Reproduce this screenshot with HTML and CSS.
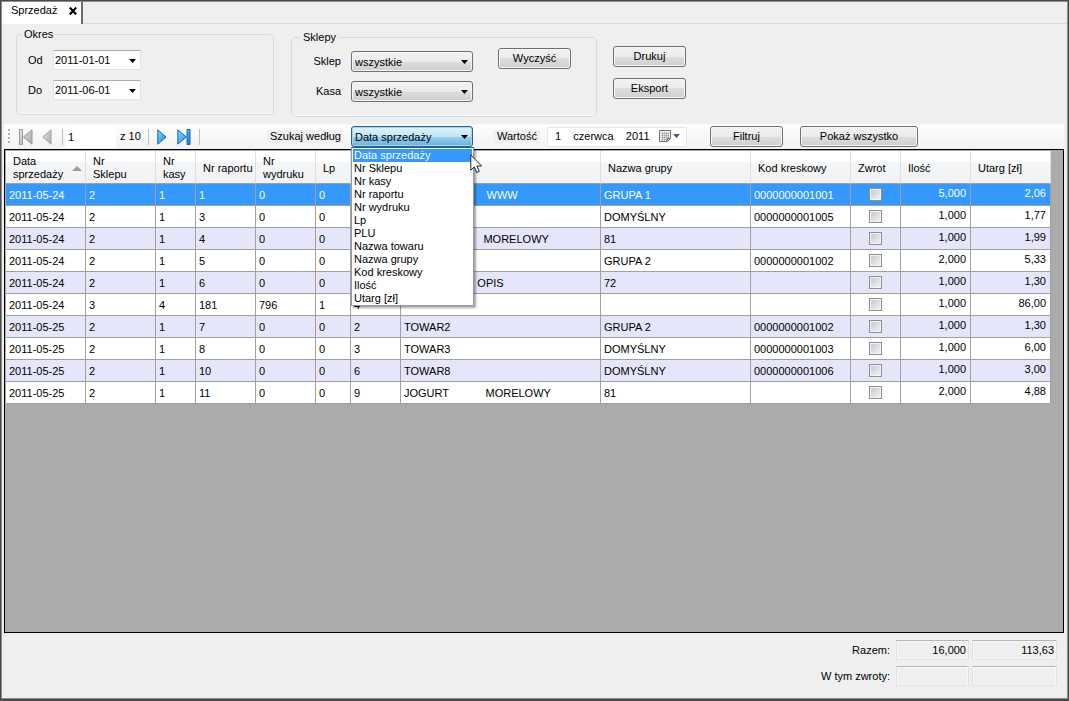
FILE: index.html
```html
<!DOCTYPE html>
<html lang="pl">
<head>
<meta charset="utf-8">
<title>Sprzedaż</title>
<link rel="stylesheet" href="styles.css">
</head>
<body>
<div class="window">
  <header class="tabs">
    <div class="tab">Sprzedaż
      <button class="tab-close" type="button" aria-label="Zamknij"><svg width="8" height="8" viewBox="0 0 8 8"><path d="M.8 .6L7.200 7.400M7.200 .6L.8 7.400" stroke="#000" stroke-width="2.2"/></svg></button>
    </div>
  </header>

  <section class="filters">
    <fieldset class="group period">
      <legend>Okres</legend>
      <div class="period-grid">
        <label for="od">Od</label>
        <div class="pick"><select id="od" class="date-select"><option>2011-01-01</option></select><svg class="arrow" width="7" height="4" viewBox="0 0 7 4"><path d="M0 0H7L3.500 4Z"/></svg></div>
        <label for="do">Do</label>
        <div class="pick"><select id="do" class="date-select"><option>2011-06-01</option></select><svg class="arrow" width="7" height="4" viewBox="0 0 7 4"><path d="M0 0H7L3.500 4Z"/></svg></div>
      </div>
    </fieldset>

    <fieldset class="group shops">
      <legend>Sklepy</legend>
      <div class="shops-body">
        <div class="shops-grid">
          <label for="sklep">Sklep</label>
          <div class="pick"><select id="sklep" class="combo"><option>wszystkie</option></select><svg class="arrow" width="7" height="4" viewBox="0 0 7 4"><path d="M0 0H7L3.500 4Z"/></svg></div>
          <label for="kasa">Kasa</label>
          <div class="pick"><select id="kasa" class="combo"><option>wszystkie</option></select><svg class="arrow" width="7" height="4" viewBox="0 0 7 4"><path d="M0 0H7L3.500 4Z"/></svg></div>
        </div>
        <button class="btn" type="button">Wyczyść</button>
      </div>
    </fieldset>

    <div class="actions">
      <button class="btn" type="button">Drukuj</button>
      <button class="btn" type="button">Eksport</button>
    </div>
  </section>

  <nav class="toolbar">
    <div class="pager">
      <svg class="grip" width="2" height="15" viewBox="0 0 2 15" fill="#b4b4b4"><path d="M0 0h2v2H0zM0 4h2v2H0zM0 8h2v2H0zM0 12h2v2H0z"/></svg>
      <button class="nav nav-first" type="button" aria-label="Pierwsza"><svg width="14" height="16" viewBox="0 0 14 16"><defs><linearGradient id="gray" x1="0" y1="0" x2="1" y2="1"><stop offset="0" stop-color="#e6e6e6"/><stop offset="1" stop-color="#a8a8a8"/></linearGradient><linearGradient id="blue" x1="0" y1="0" x2="1" y2="1"><stop offset="0" stop-color="#8fdcfc"/><stop offset="1" stop-color="#0a83dc"/></linearGradient></defs><path d="M.5.5h3v15h-3zM13 .8v14.400L4.500 8z" fill="url(#gray)" stroke="#999"/></svg></button>
      <button class="nav nav-prev" type="button" aria-label="Poprzednia"><svg width="10" height="16" viewBox="0 0 10 16"><path d="M9 .8v14.400L.8 8z" fill="url(#gray)" stroke="#a0a0a0"/></svg></button>
      <span class="sep"></span>
      <input class="page-no" type="text" value="1" aria-label="Strona">
      <span class="page-total">z 10</span>
      <span class="sep"></span>
      <button class="nav nav-next" type="button" aria-label="Następna"><svg width="10" height="16" viewBox="0 0 10 16"><path d="M.8.8v14.400L9 8z" fill="url(#blue)" stroke="#0b66b8"/></svg></button>
      <button class="nav nav-last" type="button" aria-label="Ostatnia"><svg width="14" height="16" viewBox="0 0 14 16"><path d="M.8.8v14.400L9.300 8zM10 .5h3v15h-3z" fill="url(#blue)" stroke="#0b66b8"/></svg></button>
      <span class="sep"></span>
    </div>
    <label class="chip search-label" for="pole">Szukaj według</label>
    <div class="pick search">
      <select id="pole" class="combo combo-open"><option>Data sprzedaży</option></select><svg class="arrow" width="7" height="4" viewBox="0 0 7 4"><path d="M0 0H7L3.500 4Z"/></svg>
      <ul class="menu" role="listbox" aria-label="Szukaj według">
        <li class="current" role="option" aria-selected="true">Data sprzedaży</li>
        <li role="option">Nr Sklepu</li>
        <li role="option">Nr kasy</li>
        <li role="option">Nr raportu</li>
        <li role="option">Nr wydruku</li>
        <li role="option">Lp</li>
        <li role="option">PLU</li>
        <li role="option">Nazwa towaru</li>
        <li role="option">Nazwa grupy</li>
        <li role="option">Kod kreskowy</li>
        <li role="option">Ilość</li>
        <li role="option">Utarg [zł]</li>
      </ul>
      <svg class="cursor" width="13" height="20" viewBox="0 0 13 20"><path d="M.8 1v15.200l3.500-3.300 2.400 5.600 2.600-1.100-2.400-5.400h4.700z" fill="#fff" stroke="#223" stroke-width="1"/></svg>
    </div>
    <label class="chip value-label" for="wartosc">Wartość</label>
    <div class="date-value">
      <input id="wartosc" type="text" value="1    czerwca    2011">
      <svg class="calendar" width="21" height="13" viewBox="0 0 21 13"><path d="M.5.5h11v8l-3 3h-8z" fill="#f4f2ee" stroke="#77726c"/><path d="M2 3.500h8M2 5.500h8M2 7.500h8M2 9.500h6M3.500 2v9M5.500 2v9M7.500 2v9M9.500 2v6" stroke="#aaa8b0" stroke-width=".8"/><path d="M11.500 8.500h-3v3z" fill="#d8d4d0" stroke="#77726c"/><path d="M14 4h7l-3.500 4z" fill="#3f5a7c"/></svg>
    </div>
    <button class="btn filter-btn" type="button">Filtruj</button>
    <button class="btn wide" type="button">Pokaż wszystko</button>
  </nav>

  <main class="grid">
    <table>
      <colgroup><col class="w80"><col class="w70"><col class="w40"><col class="w60"><col class="w60"><col class="w35"><col class="w50"><col class="w200"><col class="w150"><col class="w100"><col class="w50"><col class="w70"><col class="w80"></colgroup>
      <thead>
        <tr><th><div class="sorted"><span>Data<br>sprzedaży</span><svg width="10" height="5" viewBox="0 0 10 5"><path d="M0 5H10L5 0Z" fill="#9a9a9a"/></svg></div></th><th>Nr<br>Sklepu</th><th>Nr<br>kasy</th><th>Nr raportu</th><th>Nr<br>wydruku</th><th>Lp</th><th></th><th></th><th>Nazwa grupy</th><th>Kod kreskowy</th><th>Zwrot</th><th>Ilość</th><th>Utarg [zł]</th></tr>
      </thead>
      <tbody>
        <tr class="selected"><td>2011-05-24</td><td>2</td><td>1</td><td>1</td><td>0</td><td>0</td><td></td><td>                           WWW</td><td>GRUPA 1</td><td>0000000001001</td><td class="check"><input type="checkbox" aria-label="Zwrot"></td><td class="num">5,000</td><td class="num">2,06</td></tr>
        <tr><td>2011-05-24</td><td>2</td><td>1</td><td>3</td><td>0</td><td>0</td><td></td><td></td><td>DOMYŚLNY</td><td>0000000001005</td><td class="check"><input type="checkbox" aria-label="Zwrot"></td><td class="num">1,000</td><td class="num">1,77</td></tr>
        <tr><td>2011-05-24</td><td>2</td><td>1</td><td>4</td><td>0</td><td>0</td><td></td><td>                          MORELOWY</td><td>81</td><td></td><td class="check"><input type="checkbox" aria-label="Zwrot"></td><td class="num">1,000</td><td class="num">1,99</td></tr>
        <tr><td>2011-05-24</td><td>2</td><td>1</td><td>5</td><td>0</td><td>0</td><td></td><td></td><td>GRUPA 2</td><td>0000000001002</td><td class="check"><input type="checkbox" aria-label="Zwrot"></td><td class="num">2,000</td><td class="num">5,33</td></tr>
        <tr><td>2011-05-24</td><td>2</td><td>1</td><td>6</td><td>0</td><td>0</td><td></td><td>                        OPIS</td><td>72</td><td></td><td class="check"><input type="checkbox" aria-label="Zwrot"></td><td class="num">1,000</td><td class="num">1,30</td></tr>
        <tr><td>2011-05-24</td><td>3</td><td>4</td><td>181</td><td>796</td><td>1</td><td>4</td><td></td><td></td><td></td><td class="check"><input type="checkbox" aria-label="Zwrot"></td><td class="num">1,000</td><td class="num">86,00</td></tr>
        <tr><td>2011-05-25</td><td>2</td><td>1</td><td>7</td><td>0</td><td>0</td><td>2</td><td>TOWAR2</td><td>GRUPA 2</td><td>0000000001002</td><td class="check"><input type="checkbox" aria-label="Zwrot"></td><td class="num">1,000</td><td class="num">1,30</td></tr>
        <tr><td>2011-05-25</td><td>2</td><td>1</td><td>8</td><td>0</td><td>0</td><td>3</td><td>TOWAR3</td><td>DOMYŚLNY</td><td>0000000001003</td><td class="check"><input type="checkbox" aria-label="Zwrot"></td><td class="num">1,000</td><td class="num">6,00</td></tr>
        <tr><td>2011-05-25</td><td>2</td><td>1</td><td>10</td><td>0</td><td>0</td><td>6</td><td>TOWAR8</td><td>DOMYŚLNY</td><td>0000000001006</td><td class="check"><input type="checkbox" aria-label="Zwrot"></td><td class="num">1,000</td><td class="num">3,00</td></tr>
        <tr><td>2011-05-25</td><td>2</td><td>1</td><td>11</td><td>0</td><td>0</td><td>9</td><td>JOGURT            MORELOWY</td><td>81</td><td></td><td class="check"><input type="checkbox" aria-label="Zwrot"></td><td class="num">2,000</td><td class="num">4,88</td></tr>
      </tbody>
    </table>
  </main>

  <footer class="totals">
    <label for="razem">Razem:</label>
    <input id="razem" type="text" value="16,000" readonly>
    <input type="text" value="113,63" aria-label="Razem utarg" readonly>
    <label for="zwroty">W tym zwroty:</label>
    <input id="zwroty" type="text" readonly>
    <input type="text" aria-label="W tym zwroty utarg" readonly>
  </footer>
</div>
</body>
</html>
```

FILE: styles.css
```css
* { box-sizing: border-box; }

body {
  margin: 0;
  background: #efefef;
  color: #000;
  font: 11px/13px "Liberation Sans", Arial, sans-serif;
}

button, input, select { font: inherit; color: inherit; }

.window {
  display: flex;
  flex-direction: column;
  min-height: 100vh;
  border: 1px solid #4a484a;
  border-bottom-width: 2px;
  box-shadow: inset 0 0 0 1px #8c8c8c;
  padding: 1px;
}

/* Tab strip */
.tabs {
  display: flex;
  height: 22px;
  border-bottom: 1px solid #dadada;
}
.tab {
  display: flex;
  align-items: center;
  gap: 12px;
  height: 22px;
  padding: 0 4px 5px 9px;
  background: #fff;
  border-right: 2px solid #6c6c6c;
}
.tab-close {
  display: flex;
  padding: 0;
  border: 0;
  background: none;
}

/* Filters */
.filters {
  display: flex;
  align-items: flex-start;
  height: 100px;
  padding: 4px 0 0 14px;
}
.group {
  margin: 0;
  padding: 0;
  border: 1px solid #d3dce5;
  border-radius: 4px;
  box-shadow: inset 0 -1px 0 #fafafa;
}
.group legend {
  margin-left: 5px;
  padding: 0 2px;
}
.period {
  width: 258px;
  height: 87px;
}
.period-grid {
  display: grid;
  grid-template-columns: 25px 88px;
  grid-auto-rows: 20px;
  row-gap: 10px;
  align-items: center;
  padding: 9px 0 0 11px;
}
.shops {
  width: 306px;
  height: 86px;
  margin: 3px 0 0 17px;
}
.shops legend { margin-left: 9px; }
.shops-body {
  display: flex;
  align-items: flex-start;
  gap: 25px;
  padding-top: 4px;
}
.shops-grid {
  display: grid;
  grid-template-columns: 49px 122px;
  grid-auto-rows: 21px;
  gap: 9px 10px;
  align-items: center;
  padding-top: 3px;
  text-align: right;
}
.actions {
  display: flex;
  flex-direction: column;
  gap: 11px;
  margin: 18px 0 0 16px;
}

.pick { position: relative; }
.pick select {
  display: block;
  width: 100%;
  margin: 0;
  appearance: none;
  outline: 0;
}
.arrow {
  position: absolute;
  top: 9px;
  right: 5px;
  pointer-events: none;
}
.date-select {
  height: 20px;
  padding: 0 1px;
  border: 1px solid #e2e3ea;
  border-top-color: #abadb3;
  border-radius: 1px;
  background: #fff;
}
.combo, .btn {
  height: 21px;
  border: 1px solid #707070;
  border-radius: 3px;
  background: linear-gradient(#f2f2f2, #ebebeb 50%, #dddddd 50%, #cfcfcf);
  box-shadow: inset 0 0 0 1px #f6f6f6;
}
.combo { padding: 1px 3px 0; }
.combo-open {
  border-color: #2c628b;
  background: linear-gradient(#dff2fc, #c4e5f6 50%, #98d1ef 50%, #68b3db);
  box-shadow: inset 0 0 0 1px #a5d5ee;
}
.btn {
  width: 73px;
  padding: 0;
}
.btn.wide {
  width: 118px;
  margin-left: 17px;
}

/* Toolbar */
.toolbar {
  display: flex;
  align-items: center;
  height: 25px;
  margin: 0 3px 0 2px;
  border-radius: 2px;
  background: linear-gradient(#fdfdfd, #f2f2f2);
}
.pager {
  display: flex;
  align-items: center;
  width: 263px;
  padding-left: 4px;
}
.nav {
  display: flex;
  padding: 0;
  border: 0;
  background: none;
}
.nav-first { margin-left: 9px; }
.nav-prev { margin: 0 10px 0 9px; }
.nav-next { margin-left: 8px; }
.nav-last { margin: 0 8px 0 10px; }
.sep {
  width: 1px;
  height: 16px;
  background: #bdbdbd;
}
.page-no {
  width: 50px;
  height: 22px;
  margin-left: 3px;
  padding: 0 2px;
  border: 0;
  background: #fff;
}
.page-total {
  width: 32px;
  padding-left: 4px;
}
.chip {
  padding: 0 3px;
  background: #efefef;
  white-space: nowrap;
}
.search-label {
  width: 76px;
}
.search {
  width: 122px;
  margin-left: 8px;
}
.value-label { margin-left: 21px; }
.date-value {
  display: flex;
  align-items: center;
  width: 140px;
  height: 20px;
  margin-left: 7px;
  padding-right: 6px;
  border: 1px solid #e6e6ec;
  border-radius: 2px;
  background: #fff;
}
.date-value input {
  flex: 1;
  min-width: 0;
  padding: 0 0 0 7px;
  border: 0;
  background: none;
}
.filter-btn { margin-left: 23px; }

.menu {
  position: absolute;
  z-index: 2;
  top: 21px;
  left: 0;
  width: 123px;
  margin: 0;
  padding: 1px 1px 0;
  border: 1px solid #8e9aa6;
  border-top-color: #2c628b;
  background: #fff;
  box-shadow: 2px 2px 2px rgba(0, 0, 0, 0.35);
  list-style: none;
}
.menu li { padding: 0 1px; }
.menu .current {
  background: #3399ff;
  color: #fff;
}
.cursor {
  position: absolute;
  z-index: 3;
  top: 28px;
  left: 119px;
}

/* Data grid */
.grid {
  flex: 1;
  margin: 0 3px 0 2px;
  padding: 1px;
  border: 1px solid #000;
  background: #ababab;
}
table {
  width: 1045px;
  table-layout: fixed;
  border-collapse: separate;
  border-spacing: 0;
}
.w35 { width: 35px; }
.w40 { width: 40px; }
.w50 { width: 50px; }
.w60 { width: 60px; }
.w70 { width: 70px; }
.w80 { width: 80px; }
.w100 { width: 100px; }
.w150 { width: 150px; }
.w200 { width: 200px; }
th {
  height: 33px;
  padding: 2px 0 0 7px;
  border-right: 1px solid #dedfe1;
  border-bottom: 1px solid #a0a0a0;
  background: linear-gradient(#ffffff 35%, #f5f6f8 35%, #f1f2f4);
  font-weight: normal;
  text-align: left;
}
.sorted {
  display: flex;
  align-items: center;
  justify-content: space-between;
  padding-right: 3px;
}
td {
  height: 22px;
  padding: 1px 3px 0;
  border-right: 1px solid #a0a0a0;
  border-bottom: 1px solid #a0a0a0;
  background: #fff;
  white-space: pre;
}
tbody tr:nth-child(odd) td { background: #e6e6fa; }
tbody tr.selected td {
  background: #3399ff;
  color: #fff;
}
td.num {
  padding: 0 4px 3px 0;
  text-align: right;
}
td.check {
  padding: 0;
  text-align: center;
}
td input {
  display: block;
  width: 13px;
  height: 13px;
  margin: 0 auto;
  appearance: none;
  border: 1px solid #8e8f8f;
  background: linear-gradient(135deg, #c0c5ce, #f6f6f6);
  box-shadow: inset 0 0 0 1px #f4f4f4;
}

/* Totals */
.totals {
  display: grid;
  grid-template-columns: auto 73px 85px;
  grid-auto-rows: 20px;
  justify-content: end;
  align-items: center;
  gap: 6px 3px;
  padding: 7px 10px 12px 0;
}
.totals label {
  padding-right: 3px;
  text-align: right;
}
.totals input {
  width: 100%;
  height: 20px;
  padding: 0 2px;
  border: 1px solid #dfe0e8;
  border-top-color: #b4b6bc;
  border-radius: 1px;
  background: #efefef;
  box-shadow: inset 0 0 0 1px #f8f8f8;
  text-align: right;
}
```
